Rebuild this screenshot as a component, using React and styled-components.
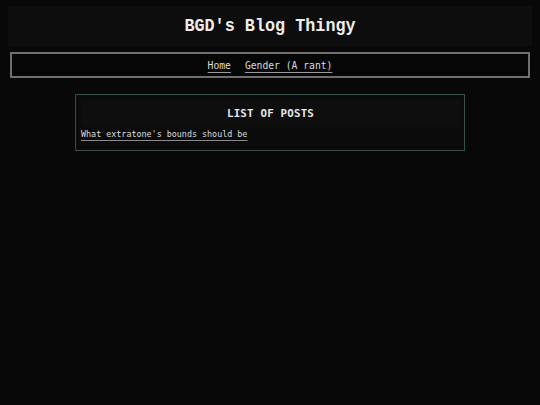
import React from "react";
import styled, { createGlobalStyle } from "styled-components";

const GlobalStyle = createGlobalStyle`
  html, body {
    margin: 0;
    background: #080808;
  }
  body {
    padding: 6px 8px;
    min-height: 405px;
    box-sizing: border-box;
    color: #e6e6e6;
    font-family: "DejaVu Sans Mono", "Liberation Mono", monospace;
  }
  * {
    box-sizing: border-box;
  }
`;

const Header = styled.header`
  background: #0d0d0d;
  height: 40px;
  padding-top: 1px;
  display: flex;
  align-items: center;
  justify-content: center;
`;

const Title = styled.h1`
  margin: 0;
  font-family: "Liberation Mono", "Courier New", monospace;
  font-weight: bold;
  font-size: 16.8px;
  color: #ececec;
  transform: scaleY(1.1);
`;

const Nav = styled.nav`
  margin: 6px 2px 0;
  height: 26px;
  border: 2px solid #6f6f6f;
  background: #060606;
  display: flex;
  align-items: center;
  justify-content: center;
  gap: 14px;
`;

const NavLink = styled.a`
  color: #dcdcdc;
  font-size: 9.7px;
  text-decoration: underline;
  text-decoration-color: #9a9a9a;
  text-underline-offset: 3px;
`;

const Panel = styled.section`
  width: 390px;
  margin: 16px auto 0;
  border: 1px solid #34504b;
  background: #0b0b0b;
  padding: 5px 4px 11px 5px;
`;

const PanelHead = styled.div`
  background: #0e0e0e;
  height: 27px;
  display: flex;
  align-items: center;
  justify-content: center;
`;

const PanelTitle = styled.h2`
  margin: 0;
  font-size: 10.8px;
  font-weight: bold;
  color: #e8e8e8;
  letter-spacing: 0.2px;
`;

const PostList = styled.div`
  margin-top: 2px;
  display: flex;
  flex-direction: column;
  align-items: flex-start;
`;

const PostLink = styled.a`
  color: #dedede;
  font-size: 8.4px;
  text-decoration: underline;
  text-decoration-color: #8a8a8a;
  text-underline-offset: 3px;
`;

export default function App() {
  return (
    <>
      <GlobalStyle />
      <Header>
        <Title>BGD's Blog Thingy</Title>
      </Header>
      <Nav>
        <NavLink>Home</NavLink>
        <NavLink>Gender (A rant)</NavLink>
      </Nav>
      <Panel>
        <PanelHead>
          <PanelTitle>LIST OF POSTS</PanelTitle>
        </PanelHead>
        <PostList>
          <PostLink>What extratone's bounds should be</PostLink>
        </PostList>
      </Panel>
    </>
  );
}
